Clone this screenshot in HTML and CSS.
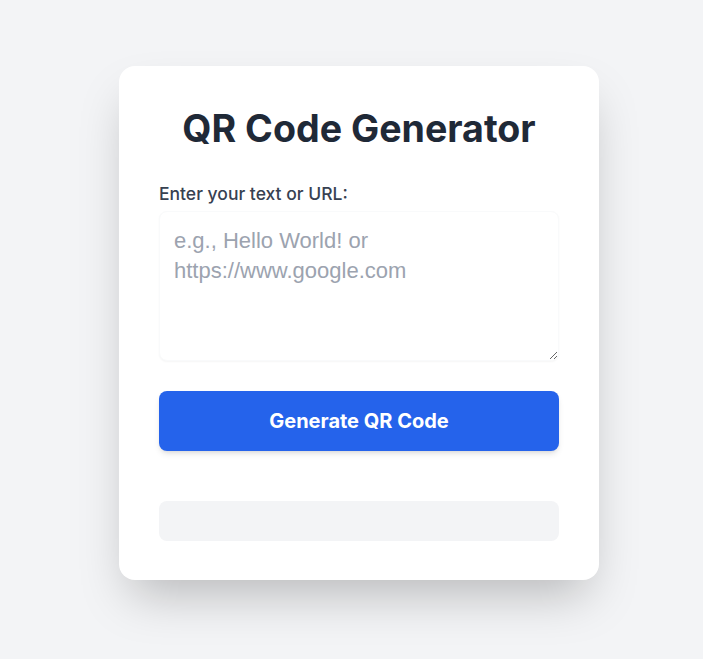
FILE: index.html
```html
<!DOCTYPE html>
<html lang="en">
<head>
<meta charset="utf-8">
<title>QR Code Generator</title>
<link rel="stylesheet" href="styles.css">
</head>
<body>
<main class="page">
  <section class="card">
    <h1 class="title">QR Code Generator</h1>
    <label class="label" for="qr-text">Enter your text or URL:</label>
    <textarea id="qr-text" class="input" placeholder="e.g., Hello World! or https://www.google.com"></textarea>
    <button class="btn" type="button">Generate QR Code</button>
    <div class="result"></div>
  </section>
</main>
</body>
</html>
```

FILE: styles.css
```css
* { box-sizing: border-box; }
html, body {
  margin: 0;
  padding: 0;
  background: #f3f4f6;
  height: 100%;
}
body {
  font-family: Inter, "Noto Sans", sans-serif;
  color: #1f2937;
}
.page {
  display: flex;
  justify-content: center;
  align-items: flex-start;
  padding: 66px 0 0 15px;
}
.card {
  width: 480px;
  background: #ffffff;
  border-radius: 16px;
  padding: 40px 40px 39px;
  box-shadow: 0 25px 50px -12px rgba(0, 0, 0, 0.25);
  display: flex;
  flex-direction: column;
}
.title {
  margin: 0 0 30px;
  font-size: 37.6px;
  line-height: 46px;
  font-weight: 700;
  text-align: center;
  color: #1f2937;
}
.label {
  display: block;
  font-size: 17.5px;
  line-height: 24px;
  font-weight: 500;
  color: #374151;
  margin-bottom: 5px;
}
.input {
  display: block;
  width: 400px;
  height: 150px;
  padding: 14px;
  border: 1px solid #f9fafb;
  border-radius: 8px;
  box-shadow: 0 1px 2px rgba(0, 0, 0, 0.04);
  font-family: "Liberation Sans", Arial, sans-serif;
  font-size: 22px;
  line-height: 30px;
  color: #1f2937;
  background: #fff;
  outline: none;
  resize: vertical;
}
.input::placeholder { color: #9ca3af; }
.btn {
  margin-top: 30px;
  height: 60px;
  width: 100%;
  border: none;
  border-radius: 8px;
  background: #2563eb;
  color: #ffffff;
  font-family: Inter, "Noto Sans", sans-serif;
  font-size: 20px;
  font-weight: 700;
  box-shadow: 0 4px 6px -1px rgba(0, 0, 0, 0.1), 0 2px 4px -2px rgba(0, 0, 0, 0.1);
  cursor: pointer;
}
.result {
  margin-top: 50px;
  height: 40px;
  border-radius: 8px;
  background: #f3f4f6;
}
```
